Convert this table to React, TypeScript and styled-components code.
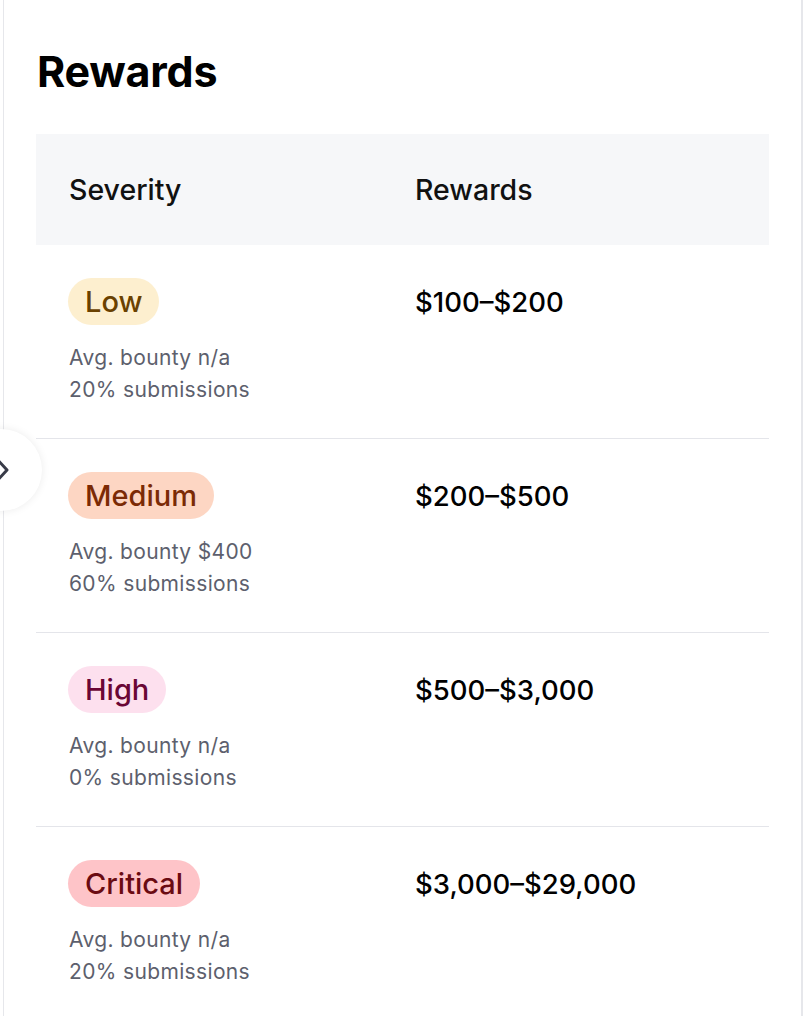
import React from "react"
import styled, { createGlobalStyle } from "styled-components"

type Level = "low" | "medium" | "high" | "critical"

interface Tier {
  level: Level
  label: string
  avg: string
  share: string
  range: string
}

const tiers: Tier[] = [
  { level: "low", label: "Low", avg: "n/a", share: "20%", range: "$100–$200" },
  { level: "medium", label: "Medium", avg: "$400", share: "60%", range: "$200–$500" },
  { level: "high", label: "High", avg: "n/a", share: "0%", range: "$500–$3,000" },
  { level: "critical", label: "Critical", avg: "n/a", share: "20%", range: "$3,000–$29,000" }
]

const badgeColors: Record<Level, { bg: string; fg: string }> = {
  low: { bg: "#fdefcf", fg: "#6a4100" },
  medium: { bg: "#fdd6c3", fg: "#7b2a05" },
  high: { bg: "#fde0ee", fg: "#6a0635" },
  critical: { bg: "#fec4c8", fg: "#6b0b12" }
}

const App: React.FC = () => (
  <>
    <GlobalStyle />
    <Panel>
      <Title>Rewards</Title>
      <Table>
        <HeadRow>
          <HeadCell>Severity</HeadCell>
          <HeadCell>Rewards</HeadCell>
        </HeadRow>
        {tiers.map((t) => (
          <Row key={t.level}>
            <SeverityCell>
              <Badge $level={t.level}>{t.label}</Badge>
              <Meta>
                Avg. bounty {t.avg}
                <br />
                {t.share} submissions
              </Meta>
            </SeverityCell>
            <Amount>{t.range}</Amount>
          </Row>
        ))}
      </Table>
      <ExpandButton aria-label="Expand">
        <svg width="12" height="28" viewBox="0 0 12 28" fill="none">
          <path
            d="M-2 2 L9 14 L-2 26"
            stroke="#383b48"
            strokeWidth="3"
            strokeLinecap="round"
            strokeLinejoin="round"
          />
        </svg>
      </ExpandButton>
    </Panel>
  </>
)

const GlobalStyle = createGlobalStyle`
  body {
    margin: 0;
    background: #ffffff;
    font-family: Inter, "Noto Sans", sans-serif;
    overflow: hidden;
  }
`

const Panel = styled.div`
  position: relative;
  margin: 0 1px 0 3px;
  padding: 44px 32px 0 32px;
  border-left: 1px solid #e6e7eb;
  border-right: 2px solid #e6e7eb;
  background: #fff;
  min-height: 1016px;
  box-sizing: border-box;
`

const Title = styled.h1`
  margin: 0 0 36px 1px;
  font-size: 43px;
  line-height: 54px;
  font-weight: 700;
  color: #000;
  letter-spacing: -0.2px;
`

const Table = styled.div`
  display: flex;
  flex-direction: column;
`

const HeadRow = styled.div`
  display: grid;
  grid-template-columns: 346px 1fr;
  align-items: center;
  height: 111px;
  padding: 0 32px 0 33px;
  background: #f6f7f9;
`

const HeadCell = styled.div`
  font-size: 28.5px;
  font-weight: 500;
  color: #111;
`

const Row = styled.div`
  display: grid;
  grid-template-columns: 347px 1fr;
  align-items: start;
  padding: 33px 32px 32px 32px;
  border-bottom: 1px solid #e4e5ea;
`

const SeverityCell = styled.div`
  display: flex;
  flex-direction: column;
  align-items: flex-start;
  gap: 17px;
`

const Badge = styled.span<{ $level: Level }>`
  display: inline-flex;
  align-items: center;
  height: 47px;
  padding: 0 17px;
  border-radius: 24px;
  font-size: 29px;
  font-weight: 500;
  background: ${(p) => badgeColors[p.$level].bg};
  color: ${(p) => badgeColors[p.$level].fg};
`

const Meta = styled.div`
  font-size: 21px;
  line-height: 32px;
  letter-spacing: 0.35px;
  color: #5d5f6d;
  padding-left: 1px;
`

const Amount = styled.div`
  height: 47px;
  display: flex;
  align-items: center;
  font-size: 27.5px;
  font-weight: 500;
  color: #000;
`

const ExpandButton = styled.button`
  position: absolute;
  left: -44px;
  top: 429px;
  width: 82px;
  height: 82px;
  border-radius: 50%;
  border: none;
  background: #fff;
  box-shadow: 0 0 8px rgba(0, 0, 0, 0.08);
  display: flex;
  align-items: center;
  justify-content: flex-end;
  padding: 0 32px 0 0;
  cursor: pointer;
`

export default App
